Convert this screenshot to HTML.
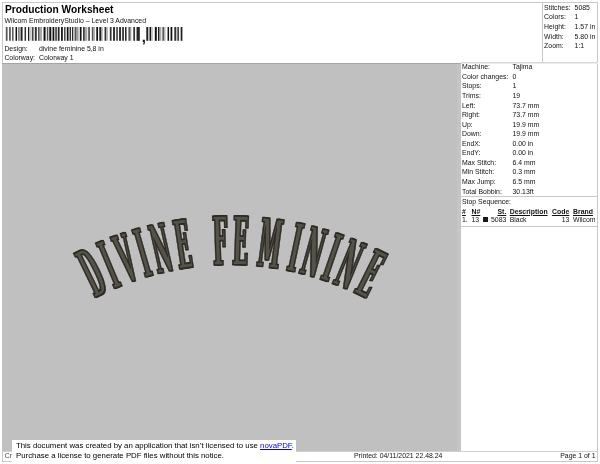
<!DOCTYPE html>
<html><head><meta charset="utf-8">
<style>
html,body{margin:0;padding:0;background:#fff;}
body{will-change:transform;width:600px;height:464px;position:relative;overflow:hidden;font-family:"Liberation Sans",sans-serif;color:#111;}
.abs{position:absolute;white-space:nowrap;}
.t{position:absolute;white-space:nowrap;font-size:6.9px;line-height:8px;}
.ln{position:absolute;background:#c8c8c8;}
.gray{position:absolute;background:#c0c0c0;}
b.u{font-weight:bold;text-decoration:underline;}
</style></head><body>
<!-- frame -->
<div class="ln" style="left:2px;top:2px;width:596px;height:1px"></div>
<div class="ln" style="left:2px;top:2px;width:1px;height:460px"></div>
<div class="ln" style="left:597px;top:2px;width:1px;height:460px"></div>
<div class="ln" style="left:2px;top:461px;width:596px;height:1px"></div>
<div class="ln" style="left:542px;top:2px;width:1px;height:61px"></div>
<div class="ln" style="left:461px;top:62px;width:137px;height:1px;background:#d6d6d6"></div>
<div class="ln" style="left:461px;top:63px;width:137px;height:1px;background:#ececec"></div>
<div class="ln" style="left:461px;top:196px;width:137px;height:1px"></div>
<div class="ln" style="left:461px;top:226px;width:137px;height:1px"></div>
<div class="ln" style="left:2px;top:451px;width:596px;height:1px;background:#cfcfcf"></div>
<!-- design area -->
<div class="gray" style="left:2px;top:63px;width:459px;height:388px;border-top:1px solid #a4a4a4;box-sizing:border-box"></div>

<div class="abs" style="left:457px;top:64px;width:4px;height:387px;background:#c5c5c5"></div>
<!-- arch -->
<svg width="600" height="464" viewBox="0 0 600 464" style="position:absolute;left:0;top:0">
<defs><path id="arc" d="M 42.56 332.92 A 291.6 291.6 0 0 1 417.44 332.92"/><filter id="thick" x="-5%" y="-10%" width="110%" height="120%" color-interpolation-filters="sRGB"><feOffset in="SourceAlpha" dx="-1.15" dy="0" result="l"/><feOffset in="SourceAlpha" dx="1.15" dy="0" result="r"/><feMerge result="m"><feMergeNode in="l"/><feMergeNode in="r"/></feMerge><feFlood flood-color="#2c2a23" result="c"/><feComposite in="c" in2="m" operator="in" result="dark"/><feMerge><feMergeNode in="dark"/><feMergeNode in="SourceGraphic"/></feMerge></filter></defs>
<g filter="url(#thick)" fill="#55524a" stroke="#2c2a23" stroke-width="1.5" stroke-linejoin="miter"><text id="at" font-family="'DejaVu Serif','Liberation Serif',serif" font-weight="bold" font-size="66.9"><textPath href="#arc" startOffset="63.12" textLength="103.87" lengthAdjust="spacingAndGlyphs"><tspan dx="0.00 16.40 17.83 15.09 15.32 16.42">DIVINE</tspan></textPath> <textPath href="#arc" startOffset="187.33" textLength="158.47" lengthAdjust="spacingAndGlyphs"><tspan dx="0.00 14.34 29.42 25.78 11.90 12.61 12.07 15.54">FEMININE</tspan></textPath></text></g>
</svg>
<!-- /arch -->
<!-- barcode -->
<svg width="190" height="20" viewBox="0 24 190 20" style="position:absolute;left:0;top:24px"><rect x="5.80" y="27" width="1.75" height="13.8" fill="#555"/><rect x="9.05" y="27" width="1.75" height="13.8" fill="#555"/><rect x="12.05" y="27" width="1.50" height="13.8" fill="#555"/><rect x="15.55" y="27" width="1.50" height="13.8" fill="#111"/><rect x="18.30" y="27" width="1.25" height="13.8" fill="#555"/><rect x="20.55" y="27" width="2.00" height="13.8" fill="#222"/><rect x="24.55" y="27" width="1.50" height="13.8" fill="#333"/><rect x="28.05" y="27" width="1.25" height="13.8" fill="#111"/><rect x="29.30" y="27" width="1.50" height="13.8" fill="#bbb"/><rect x="31.80" y="27" width="1.75" height="13.8" fill="#444"/><rect x="34.80" y="27" width="2.00" height="13.8" fill="#333"/><rect x="38.30" y="27" width="1.25" height="13.8" fill="#111"/><rect x="39.55" y="27" width="2.50" height="13.8" fill="#aaa"/><rect x="43.55" y="27" width="2.00" height="13.8" fill="#111"/><rect x="46.80" y="27" width="1.50" height="13.8" fill="#555"/><rect x="49.30" y="27" width="2.00" height="13.8" fill="#111"/><rect x="52.55" y="27" width="1.75" height="13.8" fill="#111"/><rect x="55.30" y="27" width="1.50" height="13.8" fill="#333"/><rect x="57.80" y="27" width="1.75" height="13.8" fill="#222"/><rect x="61.05" y="27" width="1.75" height="13.8" fill="#111"/><rect x="64.05" y="27" width="1.50" height="13.8" fill="#444"/><rect x="66.80" y="27" width="1.75" height="13.8" fill="#111"/><rect x="69.55" y="27" width="1.50" height="13.8" fill="#333"/><rect x="72.05" y="27" width="1.25" height="13.8" fill="#222"/><rect x="74.55" y="27" width="1.50" height="13.8" fill="#555"/><rect x="76.05" y="27" width="2.50" height="13.8" fill="#999"/><rect x="79.80" y="27" width="1.75" height="13.8" fill="#111"/><rect x="83.05" y="27" width="1.75" height="13.8" fill="#333"/><rect x="84.80" y="27" width="2.50" height="13.8" fill="#aaa"/><rect x="88.30" y="27" width="1.50" height="13.8" fill="#333"/><rect x="91.80" y="27" width="1.50" height="13.8" fill="#555"/><rect x="93.30" y="27" width="1.50" height="13.8" fill="#999"/><rect x="96.30" y="27" width="1.75" height="13.8" fill="#111"/><rect x="99.30" y="27" width="1.75" height="13.8" fill="#222"/><rect x="101.05" y="27" width="1.50" height="13.8" fill="#999"/><rect x="104.55" y="27" width="1.50" height="13.8" fill="#333"/><rect x="106.05" y="27" width="1.75" height="13.8" fill="#aaa"/><rect x="109.80" y="27" width="1.75" height="13.8" fill="#333"/><rect x="113.05" y="27" width="2.00" height="13.8" fill="#333"/><rect x="116.30" y="27" width="1.50" height="13.8" fill="#333"/><rect x="119.05" y="27" width="2.00" height="13.8" fill="#333"/><rect x="122.30" y="27" width="1.50" height="13.8" fill="#111"/><rect x="125.05" y="27" width="1.50" height="13.8" fill="#222"/><rect x="128.55" y="27" width="1.25" height="13.8" fill="#222"/><rect x="129.80" y="27" width="1.50" height="13.8" fill="#999"/><rect x="133.30" y="27" width="1.75" height="13.8" fill="#333"/><rect x="136.55" y="27" width="1.75" height="13.8" fill="#222"/><rect x="138.05" y="27" width="1.75" height="13.8" fill="#222"/><rect x="146.30" y="27" width="2.00" height="13.8" fill="#222"/><rect x="149.55" y="27" width="1.50" height="13.8" fill="#111"/><rect x="151.05" y="27" width="1.75" height="13.8" fill="#bbb"/><rect x="154.80" y="27" width="2.00" height="13.8" fill="#111"/><rect x="158.05" y="27" width="1.50" height="13.8" fill="#111"/><rect x="159.55" y="27" width="1.75" height="13.8" fill="#aaa"/><rect x="162.55" y="27" width="1.25" height="13.8" fill="#111"/><rect x="163.80" y="27" width="1.75" height="13.8" fill="#bbb"/><rect x="167.55" y="27" width="1.50" height="13.8" fill="#111"/><rect x="170.55" y="27" width="1.75" height="13.8" fill="#111"/><rect x="174.30" y="27" width="2.00" height="13.8" fill="#333"/><rect x="177.30" y="27" width="1.75" height="13.8" fill="#444"/><rect x="180.65" y="27" width="1.75" height="13.8" fill="#222"/></svg>
<!-- /barcode -->
<div class="abs" style="left:141.7px;top:29.1px;font-size:15px;line-height:15px;font-weight:bold;color:#111">,</div>
<!-- header -->
<div class="abs" style="left:5px;top:3.5px;font-size:10.2px;line-height:12px;font-weight:bold;color:#000">Production Worksheet</div>
<div class="t" style="left:4.4px;top:16.5px;font-size:6.92px">Wilcom EmbroideryStudio – Level 3 Advanced</div>
<div class="t" style="left:4.4px;top:44.7px;">Design:</div>
<div class="t" style="left:39px;top:44.7px;">divine feminine 5,8 in</div>
<div class="t" style="left:4.4px;top:54.0px;">Colorway:</div>
<div class="t" style="left:39px;top:54.0px;">Colorway 1</div>

<!-- top-right stats -->
<div class="t" style="left:544.1px;top:3.7px;">Stitches:</div><div class="t" style="left:574.6px;top:3.7px;">5085</div>
<div class="t" style="left:544.1px;top:13.3px;">Colors:</div><div class="t" style="left:574.6px;top:13.3px;">1</div>
<div class="t" style="left:544.1px;top:22.9px;">Height:</div><div class="t" style="left:574.6px;top:22.9px;">1.57 in</div>
<div class="t" style="left:544.1px;top:32.5px;">Width:</div><div class="t" style="left:574.6px;top:32.5px;">5.80 in</div>
<div class="t" style="left:544.1px;top:42.1px;">Zoom:</div><div class="t" style="left:574.6px;top:42.1px;">1:1</div>

<!-- machine info -->
<div class="t" style="left:462px;top:62.7px;">Machine:</div><div class="t" style="left:512.5px;top:62.7px;">Tajima</div>
<div class="t" style="left:462px;top:72.7px;">Color changes:</div><div class="t" style="left:512.5px;top:72.7px;">0</div>
<div class="t" style="left:462px;top:81.7px;">Stops:</div><div class="t" style="left:512.5px;top:81.7px;">1</div>
<div class="t" style="left:462px;top:91.7px;">Trims:</div><div class="t" style="left:512.5px;top:91.7px;">19</div>
<div class="t" style="left:462px;top:101.7px;">Left:</div><div class="t" style="left:512.5px;top:101.7px;">73.7 mm</div>
<div class="t" style="left:462px;top:110.7px;">Right:</div><div class="t" style="left:512.5px;top:110.7px;">73.7 mm</div>
<div class="t" style="left:462px;top:120.7px;">Up:</div><div class="t" style="left:512.5px;top:120.7px;">19.9 mm</div>
<div class="t" style="left:462px;top:129.7px;">Down:</div><div class="t" style="left:512.5px;top:129.7px;">19.9 mm</div>
<div class="t" style="left:462px;top:139.7px;">EndX:</div><div class="t" style="left:512.5px;top:139.7px;">0.00 in</div>
<div class="t" style="left:462px;top:148.7px;">EndY:</div><div class="t" style="left:512.5px;top:148.7px;">0.00 in</div>
<div class="t" style="left:462px;top:158.7px;">Max Stitch:</div><div class="t" style="left:512.5px;top:158.7px;">6.4 mm</div>
<div class="t" style="left:462px;top:167.7px;">Min Stitch:</div><div class="t" style="left:512.5px;top:167.7px;">0.3 mm</div>
<div class="t" style="left:462px;top:177.7px;">Max Jump:</div><div class="t" style="left:512.5px;top:177.7px;">6.5 mm</div>
<div class="t" style="left:462px;top:187.7px;">Total Bobbin:</div><div class="t" style="left:512.5px;top:187.7px;">30.13ft</div>
<div class="t" style="left:462px;top:197.8px;">Stop Sequence:</div>
<div class="t" style="left:462px;top:207.8px;"><b class="u">#</b></div>
<div class="t" style="left:471.5px;top:207.8px;"><b class="u">N#</b></div>
<div class="t" style="right:93.7px;top:207.8px;"><b class="u">St.</b></div>
<div class="t" style="left:509.7px;top:207.8px;"><b class="u">Description</b></div>
<div class="t" style="right:30.7px;top:207.8px;"><b class="u">Code</b></div>
<div class="t" style="left:573px;top:207.8px;"><b class="u">Brand</b></div>
<div class="t" style="left:462px;top:216.2px;">1.</div>
<div class="t" style="left:471.5px;top:216.2px;">13</div>
<div class="abs" style="left:482.9px;top:216.6px;width:5.6px;height:5.8px;background:#1a1714"></div>
<div class="t" style="right:93.7px;top:216.2px;">5083</div>
<div class="t" style="left:509.7px;top:216.2px;">Black</div>
<div class="t" style="right:30.7px;top:216.2px;">13</div>
<div class="t" style="left:573px;top:216.2px;">Wilcom</div>

<!-- footer -->
<div class="t" style="left:4.8px;top:452px;color:#444">Cr</div>
<div class="abs" style="left:12px;top:440px;width:284px;height:24px;background:#fff"></div>
<div class="abs" style="left:16px;top:441px;font-size:7.82px;line-height:9.5px;color:#000">This document was created by an application that isn’t licensed to use <span style="color:#0000ee;text-decoration:underline">novaPDF</span>.<br>Purchase a license to generate PDF files without this notice.</div>
<div class="t" style="left:354px;top:451.5px;">Printed: 04/11/2021 22.48.24</div>
<div class="t" style="right:4.5px;top:451.5px;">Page 1 of 1</div>
</body></html>
